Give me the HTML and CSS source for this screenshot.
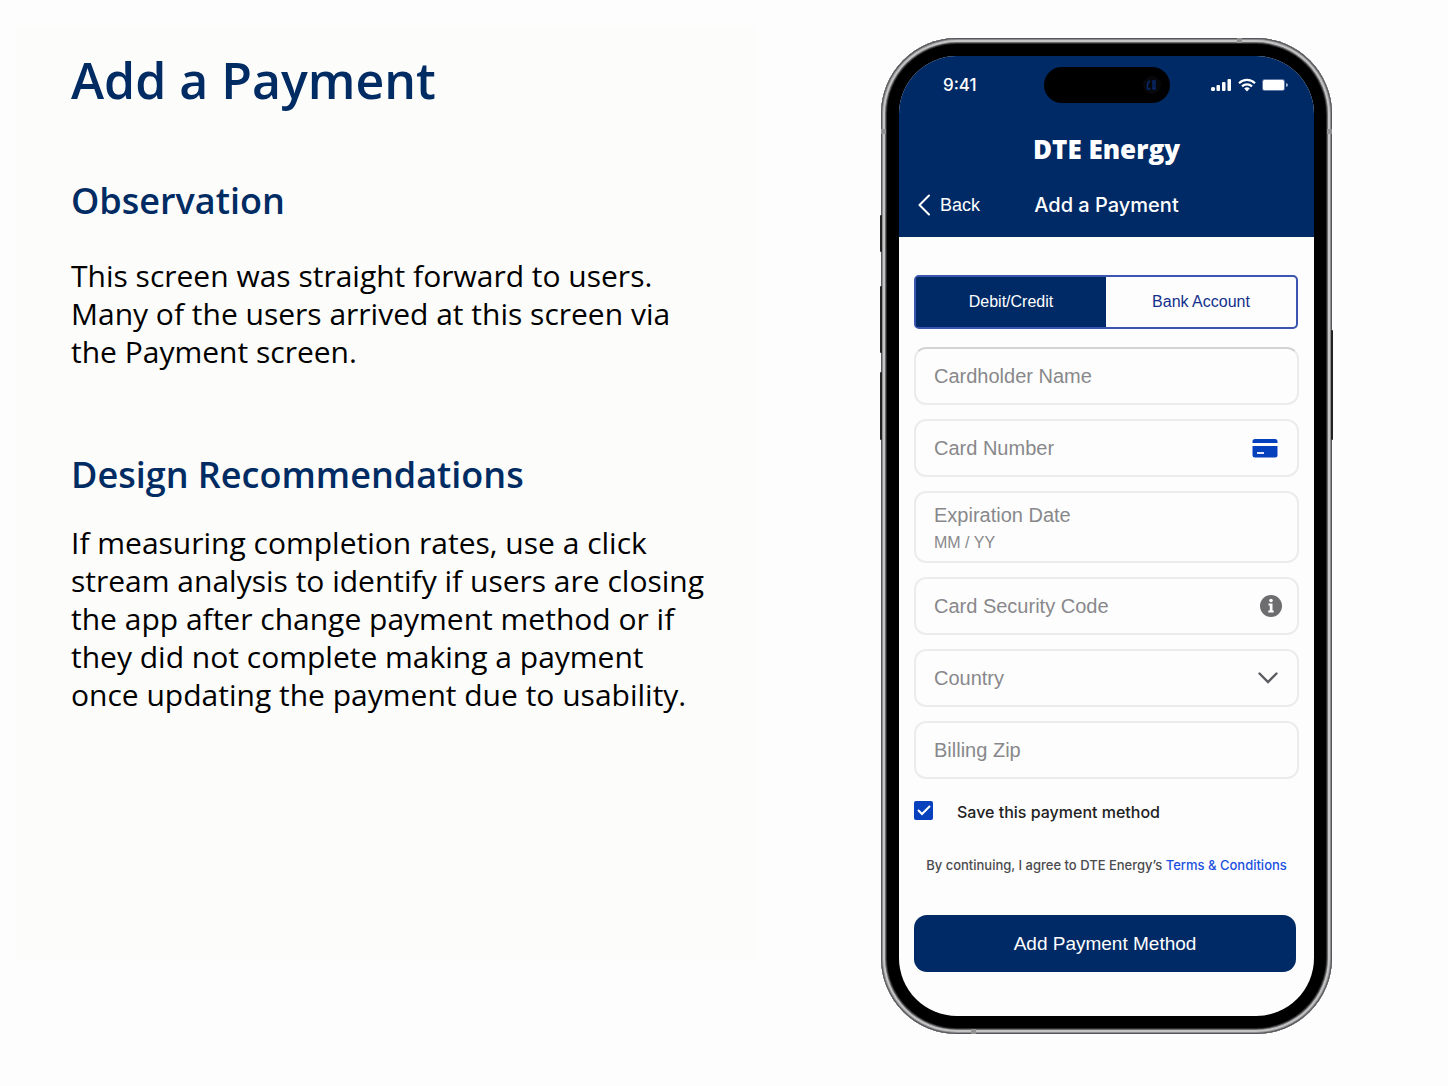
FILE: index.html
```html
<!DOCTYPE html>
<html lang="en">
<head>
    <meta charset="UTF-8">
    <meta name="viewport" content="width=device-width, initial-scale=1.0">
    <title>Add a Payment</title>
    <link rel="stylesheet" href="styles.css">
</head>
<body>
    <main class="page">
        <section class="notes">
            <h1>Add a Payment</h1>

            <h2>Observation</h2>
            <p class="observation">This screen was straight forward to users. Many of the users arrived at this screen via the Payment screen.</p>

            <h2>Design Recommendations</h2>
            <p>If measuring completion rates, use a click stream analysis to identify if users are closing the app after change payment method or if they did not complete making a payment once updating the payment due to usability.</p>
        </section>

        <section class="preview">
            <div class="phone">
                <span class="side-button action"></span>
                <span class="side-button volume-up"></span>
                <span class="side-button volume-down"></span>
                <span class="side-button power"></span>
                <span class="seam seam-top"></span>
                <span class="seam seam-bottom"></span>
                <span class="seam seam-left"></span>
                <span class="seam seam-right"></span>

                <div class="screen">
                    <header class="app-header">
                        <div class="status-bar">
                            <span class="time">9:41</span>
                            <div class="island">
                                <svg width="20" height="20" viewBox="0 0 20 20">
                                    <circle cx="10" cy="10" r="9" fill="#07080c"/>
                                    <path d="M8 6q-2.500 1-2.500 4v4h3M11 6h2v3h-2zM11 11h2v3h-2z" fill="none" stroke="#07296b" stroke-width="1.500"/>
                                </svg>
                            </div>
                            <div class="status-icons">
                                <svg width="21" height="14" viewBox="0 0 21 14" fill="#fff">
                                    <rect x="0" y="9" width="4" height="4" rx="1.500"/>
                                    <rect x="5.500" y="7" width="3.500" height="6" rx="1"/>
                                    <rect x="11" y="4" width="3.500" height="9" rx="1"/>
                                    <rect x="16.500" y="1" width="3.500" height="12" rx="1"/>
                                </svg>
                                <svg width="18" height="14" viewBox="0 0 18 14" fill="none" stroke="#fff" stroke-width="2.200">
                                    <path d="M1 5.200a11.500 11.500 0 0 1 16 0"/>
                                    <path d="M4 8.400a7.200 7.200 0 0 1 10 0"/>
                                    <path d="M9 13.400l-2.800-3a4.300 4.300 0 0 1 5.600 0z" fill="#fff" stroke="none"/>
                                </svg>
                                <svg width="26" height="12" viewBox="0 0 26 12">
                                    <rect x="0" y="0" width="23" height="12" rx="3" fill="#5f78a6"/>
                                    <rect x="1" y="1" width="21" height="10" rx="1.500" fill="#fff"/>
                                    <path d="M24 4v4q2-.5 2-2t-2-2z" fill="#a5b4cf"/>
                                </svg>
                            </div>
                        </div>
                        <div class="brand">DTE Energy</div>
                        <nav class="nav-bar">
                            <a href="#" class="back">
                                <svg width="12" height="22" viewBox="0 0 12 22" fill="none" stroke="#fff" stroke-width="2" stroke-linecap="round" stroke-linejoin="round">
                                    <path d="M11 1.500L1.500 11L11 20.500"/>
                                </svg>
                                Back
                            </a>
                            <h3>Add a Payment</h3>
                        </nav>
                    </header>

                    <form class="payment-form">
                        <div class="tabs">
                            <button type="button" class="tab active">Debit/Credit</button>
                            <button type="button" class="tab">Bank Account</button>
                        </div>

                        <div class="fields">
                            <div class="field first">
                                <input type="text" id="name" placeholder="Cardholder Name" aria-label="Cardholder Name">
                            </div>
                            <div class="field">
                                <input type="text" id="number" placeholder="Card Number" aria-label="Card Number">
                                <svg class="card-icon" width="26" height="20" viewBox="0 0 26 20">
                                    <path d="M3 1h20q2.500 0 2.500 2.500V5H.5V3.500Q.5 1 3 1z" fill="#0540bd"/>
                                    <path d="M.5 8h25v9q0 2.500-2.500 2.500H3Q.5 19.500.5 17z" fill="#0540bd"/>
                                    <path d="M5 15h7" stroke="#dfe8fa" stroke-width="2"/>
                                </svg>
                            </div>
                            <div class="field expiration">
                                <label for="expiration">Expiration Date</label>
                                <input type="text" id="expiration" placeholder="MM / YY">
                            </div>
                            <div class="field">
                                <input type="text" id="code" placeholder="Card Security Code" aria-label="Card Security Code">
                                <svg class="info-icon" width="22" height="22" viewBox="0 0 22 22">
                                    <circle cx="11" cy="11" r="11" fill="#6d6d70"/>
                                    <circle cx="11" cy="5.500" r="1.800" fill="#fff"/>
                                    <path d="M8.500 8.500h4v7h1.200v2H8.300v-2h1.500v-5H8.500z" fill="#fff"/>
                                </svg>
                            </div>
                            <div class="field">
                                <select id="country" aria-label="Country">
                                    <option>Country</option>
                                </select>
                                <svg class="chevron" width="20" height="12" viewBox="0 0 20 12" fill="none" stroke="#5c5c60" stroke-width="2.400" stroke-linecap="round">
                                    <path d="M1.500 1.500L10 10L18.500 1.500"/>
                                </svg>
                            </div>
                            <div class="field">
                                <input type="text" id="zip" placeholder="Billing Zip" aria-label="Billing Zip">
                            </div>
                        </div>

                        <div class="save-row">
                            <input type="checkbox" id="save" checked>
                            <label for="save">Save this payment method</label>
                        </div>

                        <p class="terms">By continuing, I agree to DTE Energy’s <a href="#">Terms &amp; Conditions</a></p>

                        <button type="submit" class="submit">Add Payment Method</button>
                    </form>
                </div>
            </div>
        </section>
    </main>
</body>
</html>
```
FILE: styles.css
```css
* {
    box-sizing: border-box;
}

body {
    margin: 0;
    background-color: #fdfdfd;
    font-family: "Open Sans", sans-serif;
}

.page {
    display: flex;
    align-items: flex-start;
    padding: 27px 0 27px 15px;
}

/* left side notes */
.notes {
    flex: 0 1 740px;
    min-height: 933px;
    padding: 18px 48px 18px 56px;
    background-color: #fcfcfa;
    color: #000;
}

.notes h1,
.notes h2 {
    margin: 0;
    color: #002b63;
    font-weight: 600;
}

.notes h1 {
    font-size: 50px;
    line-height: 70px;
    margin-bottom: 61px;
}

.notes h2 {
    font-size: 36px;
    line-height: 50px;
}

.notes p {
    margin: 24px 0 0;
    font-size: 30px;
    line-height: 38px;
}

.notes .observation {
    margin: 31px 0 79px;
}

/* phone */
.preview {
    flex: 1;
    display: flex;
    justify-content: center;
    padding: 11px 0 0 10px;
}

.phone {
    position: relative;
    width: 451px;
    padding: 18px;
    background-color: #000;
    border-radius: 76px;
    box-shadow: inset 0 0 0 1px #55565a, inset 0 0 0 2px #8e8f91, inset 0 0 0 4px #c4c4c4, inset 0 0 0 5px #6c6c6e, inset 0 0 0 6px #2b2b2c;
}

.side-button {
    position: absolute;
    width: 2px;
    background-color: #222;
    border-radius: 1px;
}

.action {
    left: -1px;
    top: 177px;
    height: 37px;
}

.volume-up {
    left: -1px;
    top: 248px;
    height: 67px;
}

.volume-down {
    left: -1px;
    top: 334px;
    height: 68px;
}

.power {
    right: -1px;
    top: 292px;
    height: 110px;
}

/* antenna bands on the metal frame */
.seam {
    position: absolute;
    width: 5px;
    height: 5px;
    background-color: #929294;
}

.seam-top {
    top: 0;
    right: 90px;
}

.seam-bottom {
    bottom: 0;
    left: 90px;
}

.seam-left {
    top: 91px;
    left: 0;
}

.seam-right {
    top: 91px;
    right: 0;
}

.screen {
    overflow: hidden;
    border-radius: 58px;
    background-color: #fdfdfd;
    font-family: "Liberation Sans", Arial, sans-serif;
}

.app-header {
    height: 181px;
    background-color: #002a66;
    color: #fff;
}

.status-bar {
    display: grid;
    grid-template-columns: 1fr 126px 1fr;
    align-items: center;
    padding: 11px 26px 0;
}

.time {
    padding-left: 18px;
    font-family: Inter, sans-serif;
    font-size: 17px;
    font-weight: 500;
}

.island {
    display: flex;
    align-items: center;
    justify-content: flex-end;
    height: 36px;
    padding-right: 8px;
    border-radius: 18px;
    background-color: #000;
}

.status-icons {
    display: flex;
    align-items: center;
    justify-content: flex-end;
    gap: 6px;
}

.brand {
    margin-top: 29px;
    font-family: "Open Sans", sans-serif;
    font-size: 26px;
    font-weight: 800;
    line-height: 34px;
    text-align: center;
}

.nav-bar {
    display: grid;
    grid-template-columns: 1fr auto 1fr;
    align-items: center;
    margin-top: 26px;
    padding: 0 19px;
}

.back {
    display: flex;
    align-items: center;
    gap: 10px;
    color: #fff;
    font-size: 18px;
    text-decoration: none;
}

.nav-bar h3 {
    margin: 0;
    font-family: Inter, sans-serif;
    font-size: 20px;
    font-weight: 500;
    line-height: 26px;
}

.payment-form {
    padding: 38px 15px 44px;
}

.tabs {
    display: flex;
    height: 54px;
    margin-right: 1px;
    border: 2px solid #3c55b0;
    border-radius: 5px;
    overflow: hidden;
    background-color: #002a66;
}

.tab {
    flex: 1;
    padding: 0;
    border: none;
    background-color: #fdfdfd;
    color: #12308c;
    font-family: inherit;
    font-size: 16px;
    cursor: pointer;
}

.tab.active {
    background-color: #002a66;
    box-shadow: 0 0 0 2px #002a66;
    color: #fff;
}

.fields {
    display: flex;
    flex-direction: column;
    gap: 14px;
    margin-top: 18px;
}

.field {
    display: flex;
    align-items: center;
    position: relative;
    height: 58px;
    border: 2px solid #ececed;
    border-radius: 12px;
}

.field.first {
    border-top-color: #d3d3d4;
}

.field input,
.field select {
    width: 100%;
    height: 100%;
    padding: 0 18px;
    border: none;
    background: none;
    color: #88888b;
    font-family: inherit;
    font-size: 20px;
    appearance: none;
}

.field input::placeholder {
    color: #88888b;
    opacity: 1;
}

.field svg {
    position: absolute;
    pointer-events: none;
}

.card-icon {
    right: 19px;
}

.info-icon {
    right: 15px;
}

.chevron {
    right: 19px;
}

.field.expiration {
    flex-direction: column;
    align-items: flex-start;
    height: 72px;
    padding: 9px 18px 0;
    color: #88888b;
    font-size: 20px;
    line-height: 26px;
}

.field.expiration input {
    height: 30px;
    padding: 0;
    font-size: 16px;
}

.save-row {
    display: flex;
    align-items: flex-start;
    gap: 24px;
    margin-top: 20px;
    color: #222;
    font-family: Inter, sans-serif;
    font-size: 16px;
    font-weight: 500;
    line-height: 26px;
}

.save-row input {
    appearance: none;
    width: 19px;
    height: 19px;
    margin: 2px 0 0;
    border-radius: 2px;
    background: #0640bd url("data:image/svg+xml,%3Csvg xmlns='http://www.w3.org/2000/svg' viewBox='0 0 19 19'%3E%3Cpath d='M4 9l4 4 8-8' fill='none' stroke='white' stroke-width='2'/%3E%3C/svg%3E");
}

.terms {
    margin: 30px 0 0;
    color: #4b4b4e;
    font-family: Inter, sans-serif;
    font-size: 13px;
    font-weight: 500;
    line-height: 20px;
    text-align: center;
}

.terms a {
    color: #1a50e0;
    text-decoration: none;
}

.submit {
    display: block;
    width: 100%;
    max-width: 382px;
    height: 57px;
    margin-top: 40px;
    border: none;
    border-radius: 13px;
    background-color: #002a66;
    color: #fff;
    font-family: inherit;
    font-size: 19px;
    cursor: pointer;
}
```
